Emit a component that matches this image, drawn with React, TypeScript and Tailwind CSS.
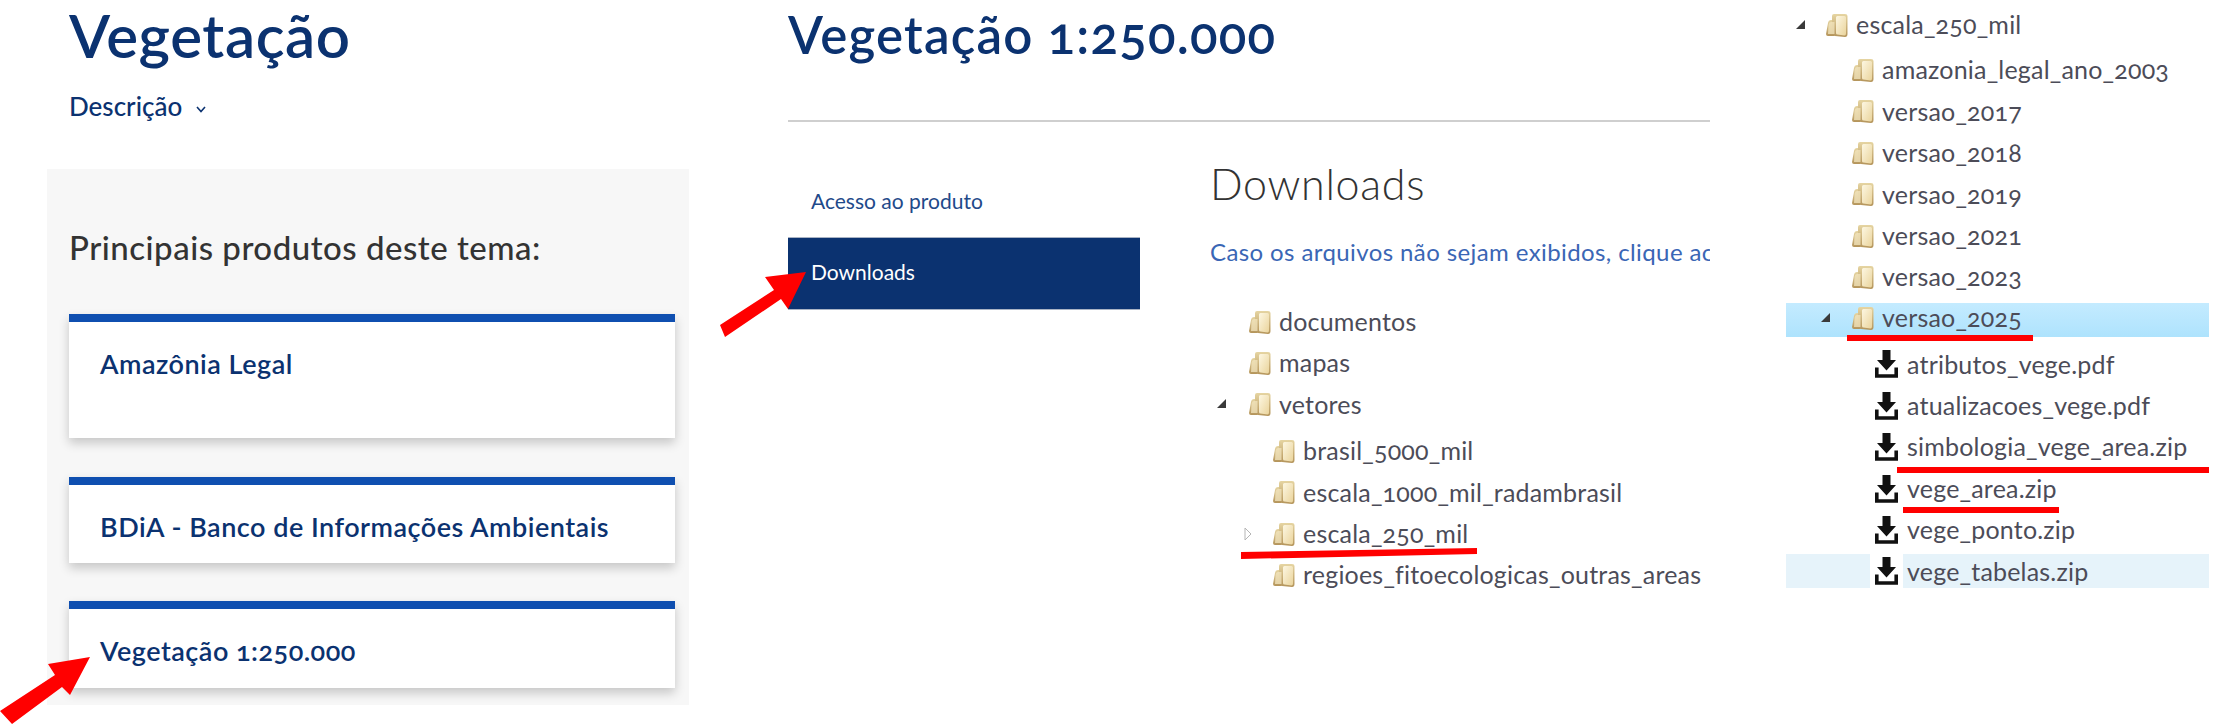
// Vegetação download walkthrough: three cropped page captures side by side
function Folder() {
  return (
    <svg className="shrink-0" width="22" height="24" viewBox="0 0 22 24">
      <defs>
        <linearGradient id="fold-back" x1="0" y1="0" x2="0" y2="1">
          <stop offset="0" stopColor="#e6d5a2" />
          <stop offset="1" stopColor="#b4945a" />
        </linearGradient>
        <linearGradient id="fold-front" x1="0" y1="0" x2="1" y2="1">
          <stop offset="0" stopColor="#fdf7e2" />
          <stop offset="1" stopColor="#ead49c" />
        </linearGradient>
      </defs>
      <path d="M0 21 L2 10 Q2.5 7 5 7 L8 7 L8 23 L2 23 Q0 23 0 21 Z" fill="url(#fold-back)" />
      <path d="M6 3 Q6 1 8 1 L19 1 Q21.5 1 21.5 3 L21.5 21 Q21.5 24 19 24 L9 23 Q6 23 6 20 Z" fill="url(#fold-back)" />
      <path d="M10 4.5 Q10 3 11.5 3 L18.5 3 Q20 3 20 4.5 L20 20.5 Q20 22.5 18.5 22.5 L11.5 21.5 Q10 21.5 10 20 Z" fill="url(#fold-front)" />
      <path d="M2.5 12 Q3 9 5 9 L8.5 9 L8.5 21 L2 21 Z" fill="#f3e6bf" opacity="0.75" />
    </svg>
  )
}

function DownloadIcon() {
  return (
    <svg className="shrink-0" width="23" height="28" viewBox="0 0 23 28">
      <path d="M7.5 0 H15.5 V10 H21 L11.5 20.5 L2 10 H7.5 Z" fill="#111" />
      <path d="M1.8 17.5 V26 H21.2 V17.5" fill="none" stroke="#111" strokeWidth="3.6" />
    </svg>
  )
}

function Open() {
  return (
    <svg width="10" height="10" viewBox="0 0 10 10">
      <polygon points="9,0 9,9 0,9" fill="#3a3a3a" />
    </svg>
  )
}

function Closed() {
  return (
    <svg width="8" height="14" viewBox="0 0 8 14">
      <polygon points="1,1 7,7 1,13" fill="#fff" stroke="#b5b5b5" />
    </svg>
  )
}

const label = 'text-[25px] tracking-[0.2px] text-[#4c4c58] whitespace-nowrap'

function FolderRow({ name, pad, slot, arrow }: { name: string; pad: string; slot: string; arrow?: 'open' | 'closed' }) {
  return (
    <div className={`flex items-center h-[41.4px] ${pad}`}>
      <div className={`flex items-center shrink-0 ${slot}`}>
        {arrow === 'open' && <Open />}
        {arrow === 'closed' && <Closed />}
      </div>
      <Folder />
      <span className={`ml-[8px] ${label}`}>{name}</span>
    </div>
  )
}

function FileRow({ name, selected }: { name: string; selected?: boolean }) {
  const tint = selected ? 'bg-[#e6f3fa]' : ''
  return (
    <div className="flex items-center h-[41.4px]">
      <div className={`w-[84px] h-[34px] ${tint}`} />
      <div className="ml-[5px]">
        <DownloadIcon />
      </div>
      <div className={`flex-1 flex items-center h-[34px] ml-[5px] pl-[4px] ${tint}`}>
        <span className={label}>{name}</span>
      </div>
    </div>
  )
}

function Card({ title, body }: { title: string; body: string }) {
  return (
    <div className={`bg-white border-t-8 border-[#0f4fb0] shadow-[0_5px_10px_rgba(0,0,0,0.2)] pl-[31px] pt-[25px] ${body}`}>
      <div className="h-[34px] flex items-center text-[27px] font-semibold tracking-[0.5px] text-[#0b3270] whitespace-nowrap">{title}</div>
    </div>
  )
}

function Annotations() {
  return (
    <svg className="absolute inset-0 pointer-events-none" width="2213" height="724" viewBox="0 0 2213 724">
      <g fill="#ff0000">
        <polygon points="90,657 48,664 55,675 0,711 12,724 62,687 70,695" />
        <polygon points="806,272 765,277 774,290 720,325 725,337 781,299 788,309" />
        <polygon points="1241,552 1477,548 1477,554 1241,559" />
        <rect x="1847" y="335" width="186" height="6" />
        <rect x="1897" y="467" width="312" height="6" />
        <rect x="1903" y="507" width="156" height="6" />
      </g>
    </svg>
  )
}

export default function App() {
  return (
    <div className="relative flex w-[2213px] h-[724px] overflow-hidden bg-white font-['Lato','Open_Sans',sans-serif] oldstyle-nums">
      {/* page capture: theme */}
      <div className="w-[788px] shrink-0 pl-[47px]">
        <h1 className="h-[76px] pl-[22px] pb-[6px] flex items-center text-[60px] font-semibold tracking-[0.6px] text-[#0b3270]">Vegetação</h1>
        <div className="h-[60px] pl-[22px] flex items-center gap-[14px] text-[26px] font-medium text-[#0b3270]">
          <span>Descrição</span>
          <svg className="mt-[6px]" width="10" height="7" viewBox="0 0 10 7">
            <path d="M1 1 L5 5.5 L9 1" fill="none" stroke="#0b3270" strokeWidth="1.6" />
          </svg>
        </div>
        <section className="mt-[33px] w-[642px] h-[536px] bg-[#f7f7f7] pt-[52px] pl-[22px] pr-[14px]">
          <h2 className="h-[58px] pb-[4px] flex items-center text-[33px] font-medium tracking-[0.5px] text-[#333]">Principais produtos deste tema:</h2>
          <div className="mt-[35px] flex flex-col">
            <Card title="Amazônia Legal" body="h-[124px]" />
            <div className="h-[39px]" />
            <Card title="BDiA - Banco de Informações Ambientais" body="h-[86px]" />
            <div className="h-[38px]" />
            <Card title="Vegetação 1:250.000" body="h-[87px]" />
          </div>
        </section>
      </div>

      {/* page capture: product */}
      <div className="w-[922px] shrink-0 overflow-hidden">
        <h1 className="h-[70px] flex items-center text-[51px] font-semibold tracking-[1.2px] text-[#0b3270]">Vegetação 1:250.000</h1>
        <div className="mt-[50px] h-[2px] bg-[#cfcfcf]" />
        <div className="flex">
          <nav className="w-[352px] shrink-0 pt-[54px]">
            <div className="h-[50px] pl-[23px] pb-[1px] flex items-center text-[21px] text-[#1f4a8a]">Acesso ao produto</div>
            <div className="mt-[11px] h-[73px] pl-[23px] pb-[3px] flex items-center bg-[#0b3270] border-y border-[#a9b3c4] text-[21px] text-white">Downloads</div>
          </nav>
          <div className="ml-[70px] flex-1 pt-[32px] min-w-0">
            <h2 className="h-[60px] flex items-center text-[43px] font-light tracking-[0.7px] text-[#333]">Downloads</h2>
            <p className="mt-[18px] h-[40px] flex items-center text-[24px] tracking-[0.4px] text-[#3a66b5] whitespace-nowrap">Caso os arquivos não sejam exibidos, clique ac</p>
            <div className="mt-[29px]">
              <FolderRow name="documentos" pad="pl-[7px]" slot="w-[32px]" />
              <FolderRow name="mapas" pad="pl-[7px]" slot="w-[32px]" />
              <FolderRow name="vetores" pad="pl-[7px]" slot="w-[32px]" arrow="open" />
              <div className="h-[5px]" />
              <FolderRow name="brasil_5000_mil" pad="pl-[34px]" slot="w-[29px]" />
              <FolderRow name="escala_1000_mil_radambrasil" pad="pl-[34px]" slot="w-[29px]" />
              <FolderRow name="escala_250_mil" pad="pl-[34px]" slot="w-[29px]" arrow="closed" />
              <FolderRow name="regioes_fitoecologicas_outras_areas" pad="pl-[34px]" slot="w-[29px]" />
            </div>
          </div>
        </div>
      </div>

      {/* page capture: expanded tree */}
      <div className="flex-1 pl-[76px] pt-[4px]">
        <div className="w-[423px]">
          <FolderRow name="escala_250_mil" pad="pl-[10px]" slot="w-[30px]" arrow="open" />
          <div className="h-[4px]" />
          <FolderRow name="amazonia_legal_ano_2003" pad="pl-[66px]" slot="w-0" />
          <FolderRow name="versao_2017" pad="pl-[66px]" slot="w-0" />
          <FolderRow name="versao_2018" pad="pl-[66px]" slot="w-0" />
          <FolderRow name="versao_2019" pad="pl-[66px]" slot="w-0" />
          <FolderRow name="versao_2021" pad="pl-[66px]" slot="w-0" />
          <FolderRow name="versao_2023" pad="pl-[66px]" slot="w-0" />
          <div className="mt-[5px] h-[34px] pb-[3px] flex items-center pl-[35px] bg-gradient-to-b from-[#c4ebff] to-[#aee3fd]">
            <div className="w-[31px]">
              <Open />
            </div>
            <Folder />
            <span className={`ml-[8px] ${label}`}>versao_2025</span>
          </div>
          <div className="h-[7px]" />
          <FileRow name="atributos_vege.pdf" />
          <FileRow name="atualizacoes_vege.pdf" />
          <FileRow name="simbologia_vege_area.zip" />
          <FileRow name="vege_area.zip" />
          <FileRow name="vege_ponto.zip" />
          <FileRow name="vege_tabelas.zip" selected />
        </div>
      </div>

      <Annotations />
    </div>
  )
}
